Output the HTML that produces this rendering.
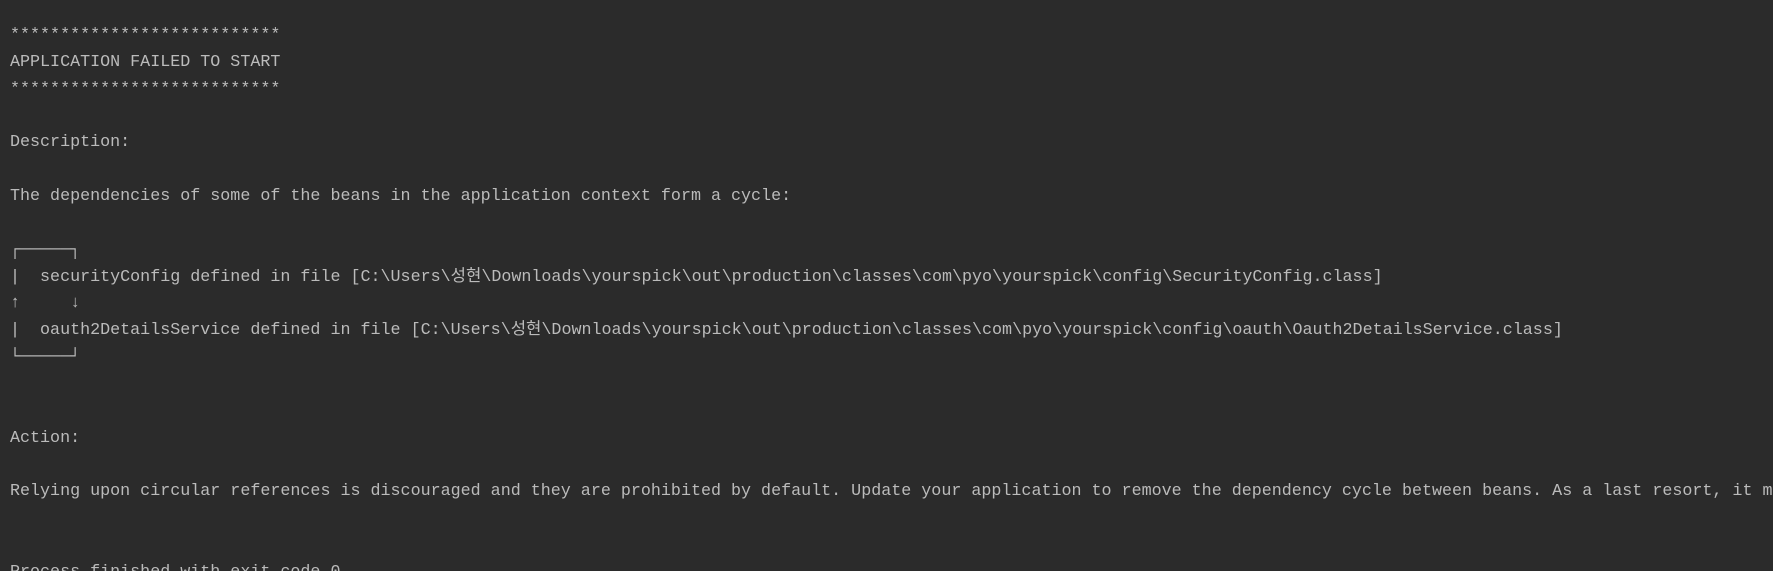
<!DOCTYPE html>
<html><head><meta charset="utf-8"><style>
html,body{margin:0;padding:0;background:#2b2b2b;width:1773px;height:571px;overflow:hidden}
pre{margin:0;padding:23px 0 0 10px;font-family:"Liberation Mono","Noto Sans CJK KR",monospace;font-size:16.7px;line-height:26.85px;color:#bbbbbb;white-space:pre}
</style></head><body><pre>***************************
APPLICATION FAILED TO START
***************************

Description:

The dependencies of some of the beans in the application context form a cycle:

┌─────┐
|  securityConfig defined in file [C:\Users\성현\Downloads\yourspick\out\production\classes\com\pyo\yourspick\config\SecurityConfig.class]
↑     ↓
|  oauth2DetailsService defined in file [C:\Users\성현\Downloads\yourspick\out\production\classes\com\pyo\yourspick\config\oauth\Oauth2DetailsService.class]
└─────┘


Action:

Relying upon circular references is discouraged and they are prohibited by default. Update your application to remove the dependency cycle between beans. As a last resort, it may be possible to break the cycle automatically by setting spring.main.allow-circular-references to true.


Process finished with exit code 0
</pre></body></html>
